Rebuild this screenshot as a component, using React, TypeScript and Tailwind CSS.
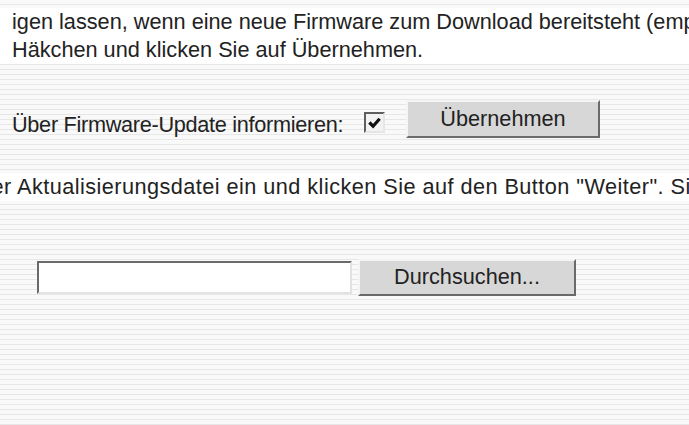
import React from "react";

const stripes =
  "bg-[repeating-linear-gradient(to_bottom,#f9f9f9_0px,#f9f9f9_4px,#e7e7e7_4px,#e7e7e7_5px)]";

function ClassicButton({ label, className }: { label: string; className: string }) {
  return (
    <button
      type="button"
      className={`flex items-center justify-center border-2 border-t-[#f4f4f4] border-l-[#f4f4f4] border-r-[#6a6a6a] border-b-[#6a6a6a] bg-[#d7d7d7] text-[#222] ${className}`}
    >
      {label}
    </button>
  );
}

function CheckBox() {
  return (
    <div className="mt-[12px] flex size-[21px] items-center justify-center border-2 border-t-[#5e5e5e] border-l-[#5e5e5e] border-r-[#e6e6e6] border-b-[#e6e6e6] bg-[#f2f2f2]">
      <svg viewBox="0 0 16 16" className="size-[15px]">
        <path d="M2.5 8 L6.5 12 L13.5 4" fill="none" stroke="#111" strokeWidth="3.4" />
      </svg>
    </div>
  );
}

export default function App() {
  return (
    <div
      className={`h-[425px] w-[689px] overflow-hidden font-['Liberation_Sans',Arial,sans-serif] text-[21.7px] text-[#222] ${stripes}`}
    >
      {/* Hinweistext oben */}
      <div className="mt-[8px] bg-white pl-[12px] leading-[28px]">
        <div className="whitespace-nowrap">
          igen lassen, wenn eine neue Firmware zum Download bereitsteht (empfohlen).
        </div>
        <div className="whitespace-nowrap">Häkchen und klicken Sie auf Übernehmen.</div>
      </div>

      {/* Firmware-Update Option */}
      <div className="mt-[36px] flex items-start pl-[12px]">
        <span className="mt-[11px] w-[352px] whitespace-nowrap leading-[28px] tracking-[-0.3px]">
          Über Firmware-Update informieren:
        </span>
        <CheckBox />
        <ClassicButton label="Übernehmen" className="ml-[21px] h-[38px] w-[194px]" />
      </div>

      {/* Hinweis Aktualisierungsdatei */}
      <div className="mt-[34px] overflow-hidden bg-white leading-[28px]">
        <div className="-ml-[21px] whitespace-nowrap tracking-[0.45px]">
          der Aktualisierungsdatei ein und klicken Sie auf den Button "Weiter". Sie
        </div>
      </div>

      {/* Datei-Auswahl */}
      <div className="mt-[58px] flex items-start pl-[37px]">
        <input
          type="text"
          className="mt-[2px] h-[33px] w-[315px] border-2 border-t-[#6a6a6a] border-l-[#6a6a6a] border-r-[#e2e2e2] border-b-[#e2e2e2] bg-white outline-none"
        />
        <ClassicButton label="Durchsuchen..." className="ml-[6px] h-[37px] w-[218px]" />
      </div>
    </div>
  );
}
